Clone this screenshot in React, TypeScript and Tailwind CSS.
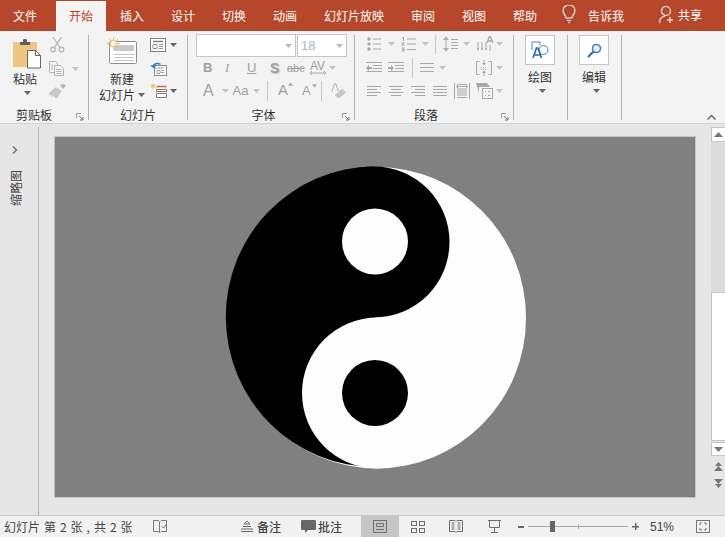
import React from 'react';

const tabs = [
  { label: '文件', w: 'w-[50px] mr-[6px]' },
  { label: '开始', w: 'w-[50px]', active: true },
  { label: '插入', w: 'w-[52px]' },
  { label: '设计', w: 'w-[50px]' },
  { label: '切换', w: 'w-[52px]' },
  { label: '动画', w: 'w-[50px]' },
  { label: '幻灯片放映', w: 'w-[88px]' },
  { label: '审阅', w: 'w-[50px]' },
  { label: '视图', w: 'w-[52px]' },
  { label: '帮助', w: 'w-[50px]' },
];

const G = '#a9a9a9';

function Caret({ color = '#8a8a8a' }: { color?: string }) {
  return (
    <svg width="7" height="4" viewBox="0 0 7 4" className="shrink-0">
      <path d="M0 0h7L3.5 4z" fill={color} />
    </svg>
  );
}

function Launcher() {
  return (
    <svg width="8" height="8" viewBox="0 0 8 8" className="shrink-0">
      <path d="M.5 5V.5H5" fill="none" stroke="#9a9a9a" />
      <path d="M3 3l4 4M7 4v3H4" fill="none" stroke="#777" />
    </svg>
  );
}

function Group({ w, label, pad = '', launcher, children }: { w: string; label?: string; pad?: string; launcher?: boolean; children: React.ReactNode }) {
  return (
    <div className={`${w} h-[85px] shrink-0 border-r border-[#b4b4b4] flex flex-col`}>
      <div className="h-[74px] flex">{children}</div>
      {label && (
        <div className={`h-[11px] flex items-center relative ${pad}`}>
          <span className="w-full text-center text-[12px] leading-[15px] text-[#333]">{label}</span>
          {launcher && (
            <span className="absolute right-[4px] top-[4px] flex">
              <Launcher />
            </span>
          )}
        </div>
      )}
    </div>
  );
}

function Align({ kind }: { kind: 'l' | 'c' | 'r' | 'j' }) {
  const rows = [14, 10, 14, 10];
  return (
    <svg width="14" height="12" viewBox="0 0 14 12">
      {rows.map((r, i) => {
        const w = kind === 'j' ? 14 : r;
        const x = kind === 'l' || kind === 'j' ? 0 : kind === 'c' ? (14 - w) / 2 : 14 - w;
        return <path key={i} d={`M${x} ${i * 3 + 1.5}h${w}`} stroke={G} />;
      })}
    </svg>
  );
}

function PasteIcon() {
  return (
    <svg width="29" height="30" viewBox="0 0 29 30">
      <rect x="0" y="3" width="24" height="25" rx="1" fill="#efc67f" />
      <path d="M7 3h3V1q0-1 2-1t2 1v2h3v3H7z" fill="#5f5f5f" />
      <path d="M14.5 11.5h8l5 5v12.5h-13z" fill="#fff" stroke="#666" />
      <path d="M22.5 11.5v5h5" fill="none" stroke="#666" />
    </svg>
  );
}

function ScissorsIcon() {
  return (
    <svg width="15" height="16" viewBox="0 0 15 16" fill="none" stroke="#b4b4b4" strokeWidth="1.3">
      <circle cx="3" cy="12.5" r="2.3" />
      <circle cx="11.5" cy="12.5" r="2.3" />
      <path d="M4.500 10.500L11.500 0M10 10.500L3 0" />
    </svg>
  );
}

function CopyIcon() {
  return (
    <svg width="15" height="15" viewBox="0 0 15 15" fill="none" stroke="#b4b4b4">
      <path d="M.5.5h6l2 2v9h-8z" fill="#f3f3f3" />
      <path d="M5.5 4.500h6l3 3v7h-9z" fill="#f3f3f3" />
      <path d="M7.500 8.500h5M7.500 10.500h5M7.500 12.500h5M2 4h2M2 6h2M2 8h2" />
    </svg>
  );
}

function BrushIcon() {
  return (
    <svg width="17" height="14" viewBox="0 0 17 14">
      <path d="M11 1l4-1 2 2-3 3z" fill="#b4b4b4" />
      <path d="M0 9l7-6 6 4-5 7H6l-1-2-2 1-1-2-2 0z" fill="#c8c8c8" />
    </svg>
  );
}

function NewSlideIcon() {
  return (
    <svg width="30" height="28" viewBox="0 0 30 28">
      <rect x="2.5" y="4.500" width="27" height="22" rx="1" fill="#fff" stroke="#8e8e8e" />
      <rect x="7" y="8" width="20" height="6" fill="#c9c9c9" />
      <path d="M7 17.500h20M7 20.500h20M7 23.500h20" stroke="#c4c4c4" />
      <circle cx="6.5" cy="6.500" r="3.500" fill="#f3c27a" />
      <path d="M6.500 0v13M0 6.500h13M2 2l9 9M11 2l-9 9" stroke="#f0bb6a" />
      <circle cx="6.5" cy="6.500" r="2.500" fill="#fff7e6" />
    </svg>
  );
}

function LayoutIcon() {
  return (
    <svg width="16" height="14" viewBox="0 0 16 14" fill="none">
      <rect x=".5" y=".5" width="15" height="13" fill="#fff" stroke="#7d7d7d" />
      <path d="M3 3.500h10" stroke="#7d7d7d" strokeWidth="1.5" />
      <path d="M3 6.500h4v4H3zM9 6.500h4M9 8.500h4M9 10.500h4" stroke="#8c8c8c" />
    </svg>
  );
}

function ResetIcon() {
  return (
    <svg width="17" height="14" viewBox="0 0 17 14" fill="none">
      <rect x="4.5" y="3.500" width="12" height="10" fill="#fff" stroke="#8a8a8a" />
      <path d="M7 6h7M11 8.500h3M11 10.500h3M7 8.500h3v3H7z" stroke="#9c9c9c" />
      <path d="M3 4.500C4 1.500 8 .5 10.500 2.500" stroke="#3f7fc1" strokeWidth="1.6" />
      <path d="M0 3.500l5.500-1v5z" fill="#3f7fc1" />
    </svg>
  );
}

function SectionIcon() {
  return (
    <svg width="17" height="15" viewBox="0 0 17 15" fill="none">
      <path d="M7 3.500h9.500M7 3.500v1" stroke="#d9682f" strokeWidth="1.3" />
      <path d="M6.500 6.500h10v2h-10zM6.500 10.500h10v4h-10z" fill="#fff" stroke="#7d7d7d" />
      <circle cx="3" cy="3" r="1.5" fill="#f0bb6a" />
      <path d="M3 0v6M0 3h6M1 1l4 4M5 1L1 5" stroke="#f0bb6a" strokeWidth=".7" />
    </svg>
  );
}

function BulletIcon() {
  return (
    <svg width="14" height="14" viewBox="0 0 14 14" fill={G}>
      <circle cx="2" cy="2" r="1.7" />
      <circle cx="2" cy="7" r="1.7" />
      <circle cx="2" cy="12" r="1.7" />
      <path d="M6 1.500h8v1H6zM6 6.500h8v1H6zM6 11.500h8v1H6z" />
    </svg>
  );
}

function NumberIcon() {
  return (
    <svg width="15" height="15" viewBox="0 0 15 15" fill={G}>
      <path d="M1 0h2v4H2V1H1zM.5 5.500h3v1l-2 1h2v1h-3V7.500l2-1h-2zM.5 10.500h3v4h-3v-1h2v-.5h-1.500v-1H2.500v-.5h-2z" />
      <path d="M6 1.500h9v1H6zM6 6.500h9v1H6zM6 12h9v1H6z" />
    </svg>
  );
}

function LineSpaceIcon() {
  return (
    <svg width="15" height="16" viewBox="0 0 15 16" fill="none" stroke={G}>
      <path d="M3 1v14" />
      <path d="M0 4l3-3.500L6 4zM0 12l3 3.500L6 12z" fill={G} stroke="none" />
      <path d="M8 3.500h7M8 6.500h7M8 9.500h7M8 12.500h7" />
    </svg>
  );
}

function TextDirIcon() {
  return (
    <svg width="16" height="16" viewBox="0 0 16 16" fill="none" stroke={G}>
      <path d="M1 6v8M5 6v8M9 6v8" />
      <path d="M0 12h2l-1 3zM4 12h2l-1 3zM8 12h2l-1 3z" fill={G} stroke="none" />
      <path d="M10 7l2.500-7h.7L16 7M11 5h4" strokeWidth="1.3" />
      <path d="M13 9v6" />
    </svg>
  );
}

function IndentIcon({ right }: { right?: boolean }) {
  return (
    <svg width="16" height="12" viewBox="0 0 16 12" fill="none" stroke={G}>
      <path d="M0 .5h16M7 3.500h9M7 6.500h9M0 9.500h16" />
      <path d={right ? 'M0 5h3V3l3 3-3 3V7H0z' : 'M6 5H3V3L0 6l3 3V7h3z'} fill={G} stroke="none" />
    </svg>
  );
}

function VAlignIcon() {
  return (
    <svg width="16" height="16" viewBox="0 0 16 16" fill="none" stroke={G}>
      <path d="M3.500 1.500h-3v13h3M12.500 1.500h3v13h-3" />
      <path d="M5 7.500h6M5 9.500h6" strokeDasharray="1 1" />
      <path d="M8 0v5M8 11v5" />
      <path d="M6 3h4l-2 2.500zM6 13h4l-2-2.500z" fill={G} stroke="none" />
    </svg>
  );
}

function ColumnsIcon() {
  return (
    <svg width="14" height="10" viewBox="0 0 14 10" stroke={G}>
      <path d="M0 .5h14M0 4.500h14M0 8.500h14" />
    </svg>
  );
}

function DistributeIcon() {
  return (
    <svg width="16" height="16" viewBox="0 0 16 16" fill="none" stroke={G}>
      <path d="M.5 0v16M15.500 0v16" />
      <path d="M3 1.500h10M3 6h10M3 8h10M3 10h10M3 12h10M3 14.500h10" />
      <path d="M3 3.500h10" />
      <path d="M2 3.500l2-2v4zM14 3.500l-2-2v4z" fill={G} stroke="none" />
    </svg>
  );
}

function SmartArtIcon() {
  return (
    <svg width="17" height="16" viewBox="0 0 17 16" fill="none" stroke={G}>
      <path d="M0 0h11l3 4H3v6z" fill={G} stroke="none" />
      <rect x="6.5" y="5.500" width="10" height="10" fill="#f3f3f3" />
      <path d="M9 8.500h1M12 8.500h2M9 12.500h1M12 12.500h2" />
    </svg>
  );
}

function Divider({ h = 'h-[20px]' }: { h?: string }) {
  return <div className={`w-px ${h} bg-[#c6c6c6] shrink-0`} />;
}

function ClipboardGroup() {
  return (
    <Group w="w-[89px]" label="剪贴板" pad="pr-[20px]" launcher>
      <div className="w-[49px] shrink-0 flex flex-col items-start pl-[13px] pt-[4px]">
        <PasteIcon />
        <span className="mt-[2px] text-[12px] leading-[16px] text-[#333]">粘贴</span>
        <span className="mt-[4px] ml-[11px]">
          <Caret color="#666" />
        </span>
      </div>
      <div className="flex flex-col pt-[2px] gap-[8px] items-start">
        <span className="ml-px flex">
          <ScissorsIcon />
        </span>
        <div className="flex items-center gap-[8px]">
          <CopyIcon />
          <Caret color="#c4c4c4" />
        </div>
        <BrushIcon />
      </div>
    </Group>
  );
}

function SlidesGroup() {
  return (
    <Group w="w-[99px]" label="幻灯片">
      <div className="w-[60px] flex flex-col items-center pt-[2px] pl-[6px] shrink-0">
        <NewSlideIcon />
        <span className="mt-[6px] text-[12px] leading-[16px] text-[#333]">新建</span>
        <span className="flex items-center gap-[3px] whitespace-nowrap text-[12px] leading-[15px] text-[#333]">
          幻灯片
          <Caret color="#666" />
        </span>
      </div>
      <div className="pl-px pt-[3px] flex flex-col">
        <div className="flex items-center gap-[4px]">
          <LayoutIcon />
          <Caret color="#666" />
        </div>
        <span className="mt-[10px] flex">
          <ResetIcon />
        </span>
        <div className="flex items-center gap-[3px] mt-[7px]">
          <SectionIcon />
          <Caret color="#666" />
        </div>
      </div>
    </Group>
  );
}

function FontGroup() {
  return (
    <Group w="w-[167px]" label="字体" pad="pr-[15px]" launcher>
      <div className="pl-[8px] -mt-px flex flex-col">
        <div className="flex h-[23px] gap-px">
          <div className="w-[100px] bg-white border border-[#c6c6c6] flex items-center justify-end pr-[3px]">
            <Caret color="#b8b8b8" />
          </div>
          <div className="w-[50px] bg-white border border-[#c6c6c6] flex items-center justify-between pl-[3px] pr-[3px] text-[13px] text-[#a9b4c4] font-['Liberation_Sans']">
            18
            <Caret color="#b8b8b8" />
          </div>
        </div>
        <div className="flex items-center h-[20px] mt-[1px] pl-[7px] text-[#a0a0a0] font-['Liberation_Sans']">
          <span className="w-[22px] text-[13px] font-bold">B</span>
          <span className="w-[22px] text-[13px] italic font-['Liberation_Serif']">I</span>
          <span className="w-[23px] text-[13px] underline">U</span>
          <span className="w-[17px] text-[14px] font-bold [text-shadow:1px_1px_1px_#bbb]">S</span>
          <span className="w-[22px] text-[11px] line-through">abc</span>
          <span className="w-[17px] text-[12px] leading-[10px] flex flex-col items-center">
            AV
            <svg width="16" height="4" viewBox="0 0 16 4" fill="none" stroke={G}>
              <path d="M0 2h16M2 0L0 2l2 2M14 0l2 2-2 2" />
            </svg>
          </span>
          <span className="ml-[3px]">
            <Caret color="#c4c4c4" />
          </span>
        </div>
        <div className="flex items-center h-[25px] pl-[7px] text-[#a0a0a0] font-['Liberation_Sans']">
          <span className="text-[16px] w-[19px]">A</span>
          <Caret color="#c4c4c4" />
          <span className="text-[13px] w-[19px] ml-[2px] text-center">Aa</span>
          <span className="ml-[3px]">
            <Caret color="#c4c4c4" />
          </span>
          <span className="ml-[7px]">
            <Divider />
          </span>
          <span className="ml-[10px] w-[24px] text-[15px] flex items-start">
            A
            <svg width="5" height="4" viewBox="0 0 6 4" className="mt-[3px]">
              <path d="M3 0l3 4H0z" fill={G} />
            </svg>
          </span>
          <span className="w-[19px] text-[13px] flex items-start">
            A
            <svg width="5" height="4" viewBox="0 0 6 4" className="mt-[3px] ml-[1px]">
              <path d="M3 4l3-4H0z" fill={G} />
            </svg>
          </span>
          <Divider />
          <svg width="16" height="16" viewBox="0 0 17 17" className="ml-[8px]">
            <path d="M2 9L5 .5h1L9 9" fill="none" stroke={G} />
            <path d="M5 13l8-7 4 4-7 6H8z" fill="#c4c4c4" />
          </svg>
        </div>
      </div>
    </Group>
  );
}

function ParagraphGroup() {
  return (
    <Group w="w-[159px]" label="段落" pad="pr-[16px]" launcher>
      <div className="pl-[12px] flex flex-col">
        <div className="flex items-center h-[18px]">
          <BulletIcon />
          <span className="ml-[7px]"><Caret color="#c4c4c4" /></span>
          <span className="ml-[6px]"><NumberIcon /></span>
          <span className="ml-[6px]"><Caret color="#c4c4c4" /></span>
          <span className="ml-[6px]"><Divider /></span>
          <span className="ml-[7px]"><LineSpaceIcon /></span>
          <span className="ml-[5px]"><Caret color="#c4c4c4" /></span>
          <span className="ml-[7px]"><TextDirIcon /></span>
          <span className="ml-[3px]"><Caret color="#c4c4c4" /></span>
        </div>
        <div className="flex items-center h-[30px] -ml-px">
          <IndentIcon />
          <span className="ml-[6px]"><IndentIcon right /></span>
          <span className="ml-[8px]"><Divider /></span>
          <span className="ml-[7px]"><ColumnsIcon /></span>
          <span className="ml-[5px]"><Caret color="#c4c4c4" /></span>
          <span className="ml-[30px]"><VAlignIcon /></span>
          <span className="ml-[4px]"><Caret color="#c4c4c4" /></span>
        </div>
        <div className="flex items-center h-[16px]">
          <Align kind="l" />
          <span className="ml-[8px]"><Align kind="c" /></span>
          <span className="ml-[8px]"><Align kind="r" /></span>
          <span className="ml-[8px]"><Align kind="j" /></span>
          <span className="ml-[7px]"><DistributeIcon /></span>
          <span className="ml-[6px]"><SmartArtIcon /></span>
          <span className="ml-[3px]"><Caret color="#c4c4c4" /></span>
        </div>
      </div>
    </Group>
  );
}

function DrawGroup({ w, label, icon }: { w: string; label: string; icon: React.ReactNode }) {
  return (
    <Group w={w}>
      <div className="w-full flex flex-col items-center pr-px">
        <div className="w-[30px] h-[30px] bg-white border border-[#c6c6c6] flex items-center justify-center">{icon}</div>
        <span className="mt-[4px] text-[12px] leading-[16px] text-[#333]">{label}</span>
        <span className="mt-[4px] ml-[5px]">
          <Caret color="#666" />
        </span>
      </div>
    </Group>
  );
}

function ShapesIcon() {
  return (
    <svg width="18" height="18" viewBox="0 0 18 18" fill="none">
      <path d="M1 9V1h8v3" stroke="#4a82bd" />
      <circle cx="12.5" cy="9" r="4.5" fill="#fff" stroke="#4a82bd" />
      <path d="M2 17L5.500 7h1.500L10.500 17M3.500 14h5.500" stroke="#2f6cb0" strokeWidth="1.7" />
    </svg>
  );
}

function FindIcon() {
  return (
    <svg width="15" height="15" viewBox="0 0 15 15" fill="none">
      <circle cx="9.5" cy="5.500" r="4" stroke="#4a82bd" strokeWidth="1.6" fill="#eaf2fb" />
      <path d="M1 14l5.500-5.500" stroke="#2f6cb0" strokeWidth="2.2" />
    </svg>
  );
}

function YinYang() {
  return (
    <svg width="300" height="302" viewBox="0 0 300 302" className="overflow-visible ml-[2px]">
      <ellipse cx="151" cy="151.750" rx="149" ry="150.750" fill="#fdfdfd" />
      <path d="M148 .5A149 150 0 0 0 150 301Z" fill="#000" />
      <circle cx="148" cy="76" r="75.500" fill="#000" />
      <circle cx="151.500" cy="227" r="75.500" fill="#fdfdfd" />
      <circle cx="149" cy="75.500" r="33" fill="#fdfdfd" />
      <circle cx="149" cy="227" r="33" fill="#000" />
    </svg>
  );
}

function StatusIcons() {
  return (
    <div className="flex items-center">
      <div className="w-[38px] h-[21px] bg-[#c6c6c6] flex items-center justify-center">
        <svg width="14" height="13" viewBox="0 0 14 13" fill="none" stroke="#6f6f6f">
          <rect x=".5" y=".5" width="13" height="12" />
          <path d="M3.500 3.500h7v3h-7zM3 9.500h8" />
        </svg>
      </div>
      <div className="w-[38px] flex justify-center">
        <svg width="14" height="12" viewBox="0 0 14 12" fill="none" stroke="#6f6f6f">
          <rect x=".5" y=".5" width="5" height="4" />
          <rect x="8.5" y=".5" width="5" height="4" />
          <rect x=".5" y="7.500" width="5" height="4" />
          <rect x="8.5" y="7.500" width="5" height="4" />
        </svg>
      </div>
      <div className="w-[37px] flex justify-center">
        <svg width="14" height="13" viewBox="0 0 14 13" fill="none" stroke="#6f6f6f">
          <path d="M.5.500h5.500l1 1 1-1h5.500v11H8l-1 1-1-1H.5z" />
          <path d="M2.500 3h3M2.500 5h3M2.500 7h3M2.500 9h3M8.500 3h3M8.500 5h3M8.500 7h3M8.500 9h3" />
        </svg>
      </div>
      <div className="w-[40px] flex justify-center">
        <svg width="13" height="13" viewBox="0 0 13 13" fill="none" stroke="#6f6f6f">
          <path d="M0 .5h13" />
          <path d="M1.500 1v6.500h10V1M6.500 8v4M3 12.500h7" />
        </svg>
      </div>
    </div>
  );
}

function ZoomSlider() {
  return (
    <div className="flex items-center ml-[4px]">
      <div className="w-[6px] h-[2px] bg-[#666]" />
      <div className="relative w-[100px] h-[9px] ml-[4px] flex items-center">
        <div className="w-full h-px bg-[#a6a6a6]" />
        <div className="absolute left-[50px] top-[2px] w-px h-[5px] bg-[#b4b4b4]" />
        <div className="absolute left-[22px] top-[-1px] w-[5px] h-[11px] bg-[#666]" />
      </div>
      <svg width="7" height="7" viewBox="0 0 7 7" className="ml-[4px]">
        <path d="M3 0h1.500v3H7v1.500H4.500V7H3V4.500H0V3h3z" fill="#666" />
      </svg>
    </div>
  );
}

export default function App() {
  return (
    <div className="w-[725px] h-[537px] overflow-hidden flex flex-col bg-[#e6e6e6] font-['Noto_Sans_CJK_SC',sans-serif]">
      {/* title tabs */}
      <div className="h-[31px] bg-[#b7472a] flex items-end shrink-0 text-white text-[12px]">
        {tabs.map((t) => (
          <div
            key={t.label}
            className={`${t.w} h-[30px] pb-[1px] flex items-center justify-center shrink-0 ${t.active ? 'bg-[#f3f3f3] text-[#b7472a]' : ''}`}
          >
            {t.label}
          </div>
        ))}
        <svg width="14" height="19" viewBox="0 0 14 19" fill="none" stroke="#fff" className="ml-[12px] mb-[7px] shrink-0">
          <path d="M4 13c0-3-3-4-3-7.500a6 5.500 0 0 1 12 0c0 3.500-3 4.500-3 7.500z" strokeWidth="1.1" />
          <path d="M5 15.500h4M6 17.500h2" strokeWidth="1.2" />
        </svg>
        <span className="ml-[12px] w-[36px] h-[30px] pb-[1px] flex items-center shrink-0">告诉我</span>
        <svg width="16" height="18" viewBox="0 0 16 18" fill="none" stroke="#fff" className="ml-[35px] mb-[7px] shrink-0" strokeWidth="1.1">
          <circle cx="7" cy="5" r="4.5" />
          <path d="M.5 17c0-4 2.500-6.500 5.500-7M11 11v6M8 14h6" />
        </svg>
        <span className="ml-[3px] h-[30px] pb-[3px] flex items-center shrink-0">共享</span>
      </div>

      {/* ribbon */}
      <div className="h-[93px] bg-[#f3f3f3] border-b border-[#d2d2d2] shrink-0 flex pt-[4px] relative">
        <ClipboardGroup />
        <SlidesGroup />
        <FontGroup />
        <ParagraphGroup />
        <DrawGroup w="w-[54px]" label="绘图" icon={<ShapesIcon />} />
        <DrawGroup w="w-[54px]" label="编辑" icon={<FindIcon />} />
        <svg width="9" height="6" viewBox="0 0 9 6" fill="none" stroke="#666" strokeWidth="1.5" className="absolute right-[9px] top-[83px]">
          <path d="M.5 5.500l4-4 4 4" />
        </svg>
      </div>

      {/* workspace */}
      <div className="flex-1 flex min-h-0 border-b border-[#c6c6c6]">
        <div className="w-[39px] shrink-0 border-r border-[#b4b4b4] flex flex-col items-center pr-[8px] pt-[19px] mt-[3px]">
          <svg width="6" height="8" viewBox="0 0 6 8" fill="none" stroke="#777" strokeWidth="1.6">
            <path d="M1 .5l3.500 3.500L1 7.500" />
          </svg>
          <span className="mt-[16px] text-[12px] leading-[13px] text-[#444] [writing-mode:vertical-rl] [text-orientation:sideways] rotate-180">缩略图</span>
        </div>
        <div className="flex-1 flex flex-col pl-[16px] pt-[13px] pr-[15px]">
          <div className="w-[640px] h-[360px] bg-[#808080] border border-[#c4c4c4] flex items-center justify-center box-content -ml-px -mt-px">
            <YinYang />
          </div>
        </div>
        <div className="w-[15px] shrink-0 flex flex-col items-stretch pt-[3px]">
          <div className="h-[15px] bg-white border border-[#c6c6c6] flex items-center justify-center">
            <svg width="9" height="5" viewBox="0 0 9 5"><path d="M4.500 0L9 5H0z" fill="#777" /></svg>
          </div>
          <div className="h-[150px] bg-[#dcdcdc]" />
          <div className="h-[149px] bg-white border border-[#c6c6c6]" />
          <div className="h-[14px] mt-px bg-white border border-[#c6c6c6] flex items-center justify-center">
            <svg width="9" height="5" viewBox="0 0 9 5"><path d="M4.500 5L9 0H0z" fill="#777" /></svg>
          </div>
          <div className="flex flex-col items-center mt-[6px] gap-[8px]">
            <svg width="9" height="9" viewBox="0 0 9 9" fill="#777"><path d="M4.500 0L8 4H1zM4.500 4L9 9H0z" /></svg>
            <svg width="9" height="9" viewBox="0 0 9 9" fill="#777"><path d="M0 0h9L4.500 5zM1 5h7L4.500 9z" /></svg>
          </div>
        </div>
      </div>

      {/* status bar */}
      <div className="h-[21px] bg-[#f1f1f1] shrink-0 flex items-center text-[12px] text-[#444]">
        <span className="ml-[4px] w-[149px] whitespace-nowrap shrink-0 [word-spacing:1.3px]">幻灯片 第 2 张 , 共 2 张</span>
        <svg width="14" height="13" viewBox="0 0 14 13" fill="none" stroke="#777" className="shrink-0">
          <path d="M.5.500h5l1 1v11l-1-1h-5zM7.500 1.500l1-1h5v11h-5l-1 1" />
          <path d="M8.500 6l2 2 3-4" />
        </svg>
        <svg width="12" height="11" viewBox="0 0 12 11" fill="none" stroke="#666" className="ml-[74px] shrink-0">
          <path d="M6 0L3 3h6zM2 5.500h8M0 8h12M0 10.500h12" />
        </svg>
        <span className="ml-[4px] w-[44px] shrink-0 font-medium">备注</span>
        <svg width="15" height="13" viewBox="0 0 15 13" className="shrink-0">
          <path d="M1 0h13q1 0 1 1v8q0 1-1 1H7l-3 3v-3H1q-1 0-1-1V1q0-1 1-1z" fill="#666" />
        </svg>
        <span className="ml-[2px] w-[24px] shrink-0 font-medium whitespace-nowrap">批注</span>
        <span className="ml-[19px] flex items-center">
          <StatusIcons />
        </span>
        <ZoomSlider />
        <span className="ml-[11px] w-[24px] shrink-0 text-[12px] font-['Liberation_Sans'] whitespace-nowrap">51%</span>
        <svg width="14" height="13" viewBox="0 0 14 13" fill="none" stroke="#777" className="ml-[22px] shrink-0">
          <rect x=".5" y=".5" width="13" height="12" />
          <path d="M3 4h2V2M11 4H9V2M3 9h2v2M11 9H9v2" />
        </svg>
      </div>
    </div>
  );
}
